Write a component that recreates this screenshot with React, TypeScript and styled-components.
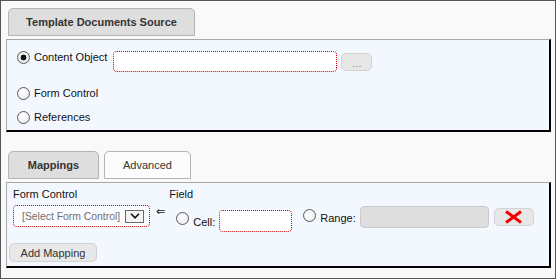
import React from "react";
import styled, { createGlobalStyle } from "styled-components";

const Global = createGlobalStyle`
  html, body { margin: 0; padding: 0; background: #f9f9f9; }
  * { box-sizing: border-box; }
`;

const Frame = styled.div`
  width: 556px;
  height: 279px;
  border: 1px solid #555;
  background: #f9f9f9;
  padding: 7px 4px 0 5px;
  font-family: "Liberation Sans", Arial, sans-serif;
  font-size: 11px;
  color: #111;
`;

const TabBar = styled.div<{ $top?: number }>`
  display: flex;
  gap: 5px;
  padding-left: 2px;
  margin-top: ${(p) => p.$top ?? 0}px;
  margin-bottom: 3px;
`;

const Tab = styled.div<{ $width: number; $active?: boolean }>`
  width: ${(p) => p.$width}px;
  height: 28px;
  border: 1px solid #b4b4b4;
  border-radius: 5px 5px 0 0;
  background: ${(p) => (p.$active ? "#dedede" : "#fcfcfc")};
  color: #333;
  font-weight: ${(p) => (p.$active ? "bold" : "normal")};
  display: flex;
  align-items: center;
  justify-content: center;
  padding-bottom: 1px;
`;

const Panel = styled.div<{ $pad: string }>`
  background: #f3f8ff;
  border-top: 1px solid #a8a8a8;
  border-left: 1px solid #a8a8a8;
  border-right: 2px solid #000;
  border-bottom: 2px solid #000;
  padding: ${(p) => p.$pad};
`;

const SourceRow = styled.div<{ $gap?: number }>`
  display: flex;
  align-items: flex-start;
  margin-top: ${(p) => p.$gap ?? 0}px;
`;

const RadioLabel = styled.label`
  display: flex;
  align-items: center;
  height: 13px;
  line-height: 13px;
  white-space: nowrap;
`;

const Radio = styled.input.attrs({ type: "radio" })<{ $lift?: number }>`
  appearance: none;
  -webkit-appearance: none;
  margin: 0 4px ${(p) => (p.$lift ?? 0) * 2}px 0;
  width: 13px;
  height: 13px;
  border-radius: 50%;
  border: 1px solid #5a5a5a;
  background: radial-gradient(circle at 40% 35%, #ffffff 0%, #f2f2f2 60%, #dcdcdc 100%);
  flex: none;
  &:checked {
    background: radial-gradient(circle, #111 0 2.7px, #f4f4f4 3.2px, #dcdcdc 100%);
  }
`;

const TextBox = styled.div<{ $w: number; $disabled?: boolean }>`
  width: ${(p) => p.$w}px;
  height: 22px;
  border-radius: 4px;
  border: ${(p) => (p.$disabled ? "1px solid #c9c9c9" : "1px dotted #c00000")};
  background: ${(p) => (p.$disabled ? "#dedede" : "#fff")};
  flex: none;
`;

const ContentInput = styled(TextBox)`
  margin-left: 6px;
  height: 21px;
`;

const SmallButton = styled.button<{ $w: number; $h: number }>`
  width: ${(p) => p.$w}px;
  height: ${(p) => p.$h}px;
  border: 1px solid #d3d3d3;
  border-radius: 5px;
  background: #e8e8e8;
  color: #333;
  font-family: inherit;
  font-size: 11px;
  padding: 0;
  display: flex;
  align-items: center;
  justify-content: center;
  flex: none;
`;

const DotsButton = styled(SmallButton)`
  margin: 2px 0 0 4px;
  color: #888;
  padding-top: 2px;
`;

const MappingRow = styled.div`
  display: flex;
  align-items: flex-start;
  padding-left: 4px;
`;

const Column = styled.div`
  display: flex;
  flex-direction: column;
  gap: 4px;
`;

const Caption = styled.div`
  line-height: 13px;
  height: 13px;
  white-space: nowrap;
`;

const Select = styled.div`
  width: 137px;
  height: 22px;
  border: 1px dotted #c00000;
  border-radius: 4px;
  background: #fbfcff;
  display: flex;
  align-items: center;
  padding-left: 8px;
  color: #707070;
  white-space: nowrap;
`;

const SelectText = styled.span`
  flex: 1;
  font-size: 10.4px;
`;

const ArrowBox = styled.span`
  width: 19px;
  height: 13px;
  border: 1px solid #6a6a6a;
  background: #f4f4f4;
  margin-right: 5px;
  display: flex;
  align-items: center;
  justify-content: center;
`;

const Arrow = styled.span`
  font-family: "DejaVu Sans", sans-serif;
  font-size: 11px;
  line-height: 8px;
  margin: 20px 0 0 6px;
  color: #111;
`;

const FieldColumn = styled(Column)`
  margin-left: 4px;
  gap: 5px;
`;

const FieldRow = styled.div`
  display: flex;
  align-items: flex-start;
`;

const Group = styled.div<{ $indent: number; $drop?: number }>`
  display: flex;
  align-items: center;
  height: 22px;
  margin-left: ${(p) => p.$indent}px;
  margin-top: ${(p) => p.$drop ?? 0}px;
`;

const GroupText = styled.span`
  margin-right: 4px;
  padding-top: 2px;
`;

const RemoveButton = styled(SmallButton)`
  margin: 2px 0 0 5px;
`;

const AddButton = styled(SmallButton)`
  margin-top: 11px;
`;

const CloseIcon = () => (
  <svg width="19" height="14" viewBox="0 0 19 14">
    <path d="M2 1.5 L17 12.5 M17 1.5 L2 12.5" stroke="#f00000" strokeWidth="3" strokeLinecap="butt" />
  </svg>
);

const Chevron = () => (
  <svg width="10" height="6" viewBox="0 0 10 6">
    <path d="M1 0.8 L5 4.8 L9 0.8" stroke="#111" strokeWidth="1.6" fill="none" />
  </svg>
);

export default function App() {
  return (
    <>
      <Global />
      <Frame>
        <TabBar>
          <Tab $width={187} $active>Template Documents Source</Tab>
        </TabBar>
        <Panel $pad="11px 0 6px 10px">
          <SourceRow>
            <RadioLabel>
              <Radio name="src" defaultChecked />
              Content Object
            </RadioLabel>
            <ContentInput $w={224} />
            <DotsButton $w={31} $h={18}>...</DotsButton>
          </SourceRow>
          <SourceRow $gap={15}>
            <RadioLabel>
              <Radio name="src" />
              Form Control
            </RadioLabel>
          </SourceRow>
          <SourceRow $gap={11}>
            <RadioLabel>
              <Radio name="src" />
              References
            </RadioLabel>
          </SourceRow>
        </Panel>

        <TabBar $top={19}>
          <Tab $width={91} $active>Mappings</Tab>
          <Tab $width={87}>Advanced</Tab>
        </TabBar>
        <Panel $pad="5px 0 4px 2px">
          <MappingRow>
            <Column>
              <Caption>Form Control</Caption>
              <Select>
                <SelectText>[Select Form Control]</SelectText>
                <ArrowBox>
                  <Chevron />
                </ArrowBox>
              </Select>
            </Column>
            <Arrow>⇐</Arrow>
            <FieldColumn>
              <Caption>Field</Caption>
              <FieldRow>
                <Group $indent={7} $drop={4}>
                  <Radio name="fld" $lift={3} />
                  <GroupText>Cell:</GroupText>
                  <TextBox $w={73} />
                </Group>
                <Group $indent={11}>
                  <Radio name="fld" $lift={2} />
                  <GroupText>Range:</GroupText>
                  <TextBox $w={129} $disabled />
                </Group>
                <RemoveButton $w={40} $h={18}>
                  <CloseIcon />
                </RemoveButton>
              </FieldRow>
            </FieldColumn>
          </MappingRow>
          <AddButton $w={88} $h={19}>Add Mapping</AddButton>
        </Panel>
      </Frame>
    </>
  );
}
